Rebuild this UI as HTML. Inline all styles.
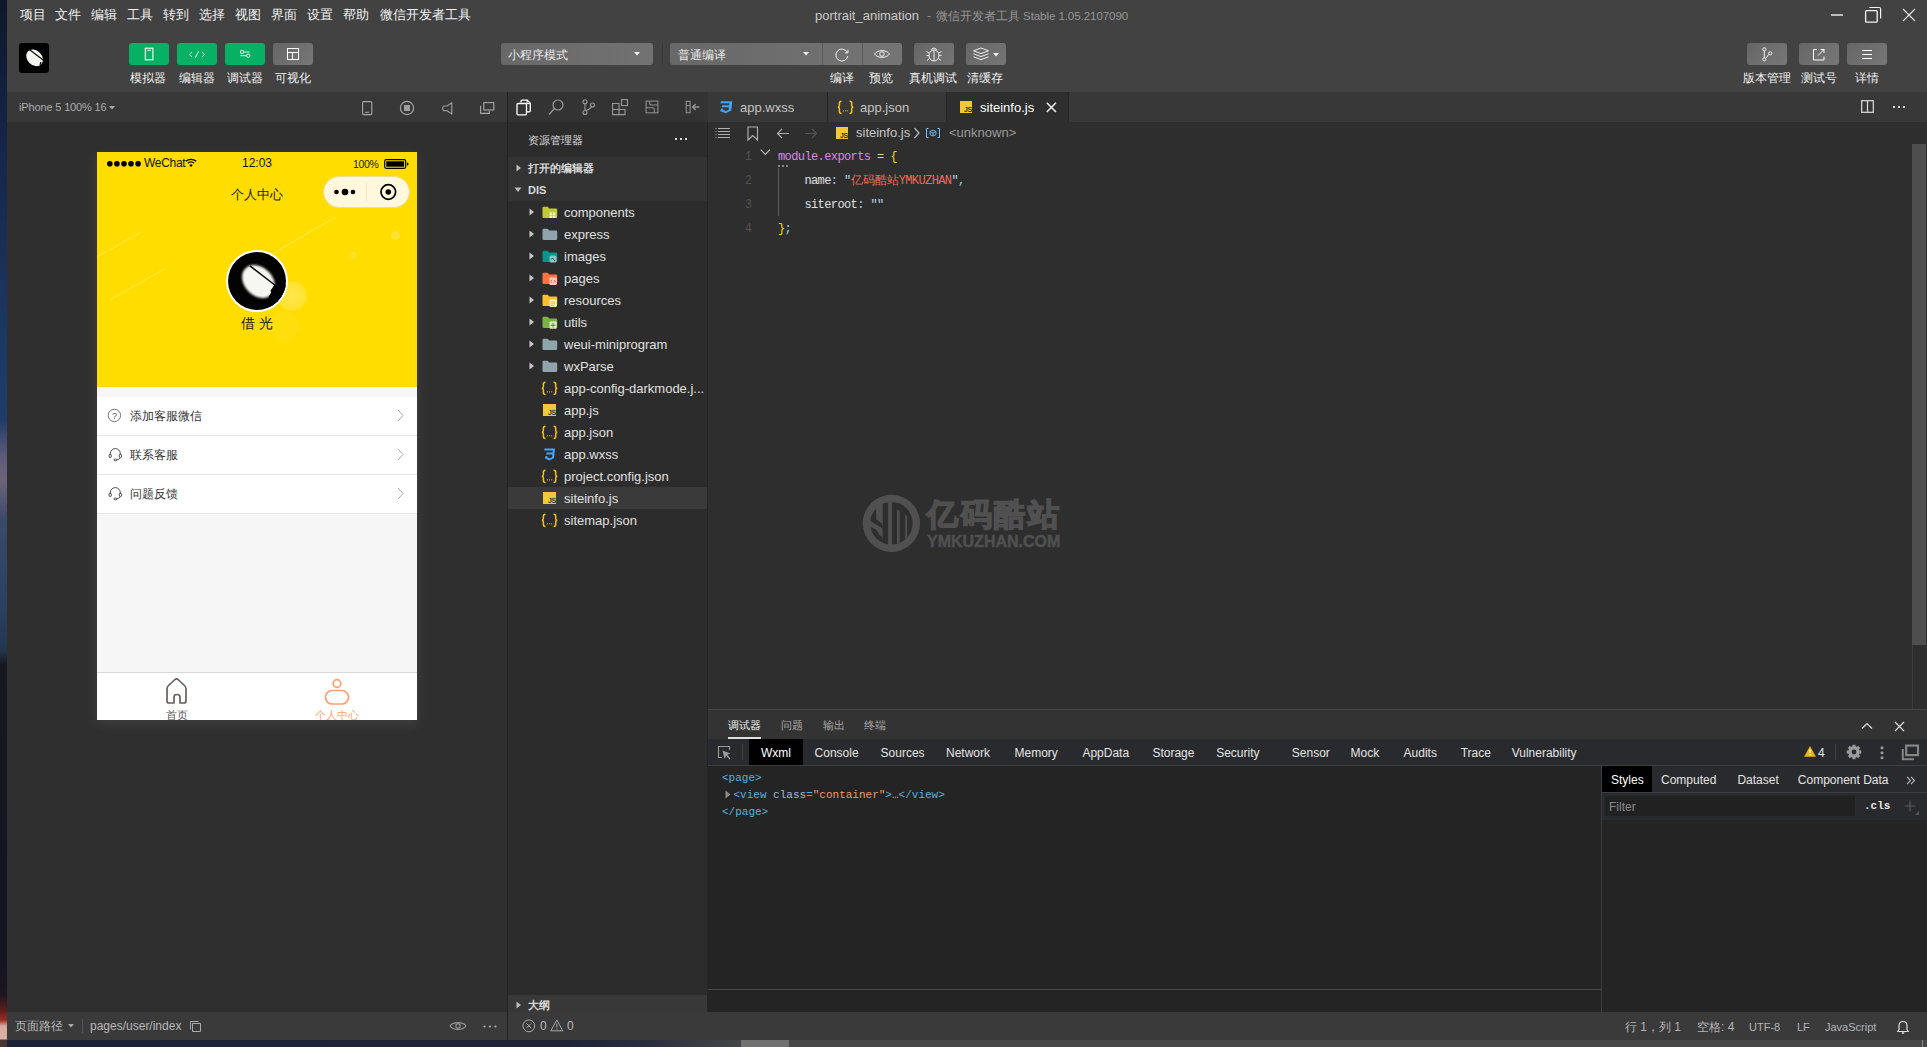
<!DOCTYPE html>
<html><head><meta charset="utf-8">
<style>
*{box-sizing:border-box;margin:0;padding:0}
html,body{width:1927px;height:1047px;overflow:hidden;background:#2e2e2e;font-family:"Liberation Sans",sans-serif;position:relative}
.a{position:absolute}
#desk{left:0;top:0;width:7px;height:1047px;background:linear-gradient(#0f1729 0px,#16264a 150px,#1c3662 320px,#203c68 420px,#5c5a7a 455px,#6e6478 480px,#3a4a6a 520px,#2a4262 600px,#243650 650px,#17171f 665px,#141520 960px,#1c1620 995px,#5a1c1c 1010px,#9a2c22 1020px,#d9a99e 1026px,#dcb0a6 1039px,#4a3430 1040px,#4a3430 1047px)}
#bstrip{left:7px;top:1040px;width:1920px;height:7px;background:linear-gradient(90deg,#1c2136 0px,#1e2336 560px,#2a2d3c 640px,#3d3e44 700px,#474747 745px,#474747 1920px)}
.menu{top:6px;font-size:13px;color:#f2f2f2;line-height:18px;white-space:nowrap}
.lbl{font-size:12px;color:#f0f0f0;line-height:14px;white-space:nowrap}
.btn{top:43px;height:22px;border-radius:3px;background:#6b6b6b}
.g{background:#07b163}
svg{position:absolute;overflow:visible}
</style></head><body>
<div class="a" id="desk"></div>
<div class="a" id="bstrip"></div>
<div class="a" style="left:741px;top:1040px;width:48px;height:7px;background:#707070"></div>

<!-- TOP BAR -->
<div class="a" style="left:7px;top:0;width:1920px;height:92px;background:#424242"></div>
<div class="a menu" style="left:20px">项目</div>
<div class="a menu" style="left:55px">文件</div>
<div class="a menu" style="left:91px">编辑</div>
<div class="a menu" style="left:127px">工具</div>
<div class="a menu" style="left:163px">转到</div>
<div class="a menu" style="left:199px">选择</div>
<div class="a menu" style="left:235px">视图</div>
<div class="a menu" style="left:271px">界面</div>
<div class="a menu" style="left:307px">设置</div>
<div class="a menu" style="left:343px">帮助</div>
<div class="a menu" style="left:380px">微信开发者工具</div>
<div class="a menu" style="left:815px;top:7px;font-size:13px;color:#c9c9c9">portrait_animation</div>
<div class="a menu" style="left:927px;top:7px;font-size:12px;color:#8f8f8f">-</div>
<div class="a menu" style="left:936px;top:7px;font-size:12px;color:#959595">微信开发者工具</div>
<div class="a menu" style="left:1023px;top:7px;font-size:11.6px;color:#959595;letter-spacing:-0.1px">Stable 1.05.2107090</div>

<!-- window controls -->
<div class="a" style="left:1831px;top:14px;width:12px;height:2px;background:#bdbdbd"></div>
<svg style="left:1864px;top:6px" width="19" height="18"><rect x="1.6" y="4.6" width="11.6" height="11.6" rx="1" fill="none" stroke="#f2f2f2" stroke-width="1.3"/><path d="M5.3 1.5H15.2Q16.6 1.5 16.6 2.9V12.6" fill="none" stroke="#f2f2f2" stroke-width="1.2"/></svg>
<svg style="left:1902px;top:8px" width="14" height="14"><path d="M1 1L13 13M13 1L1 13" stroke="#e6e6e6" stroke-width="1.1"/></svg>

<!-- logo -->
<div class="a" style="left:19px;top:43px;width:30px;height:30px;background:#020202;border-radius:3px;overflow:hidden">
 <svg style="left:0;top:0" width="30" height="30"><defs><filter id="bl" x="-50%" y="-50%" width="200%" height="200%"><feGaussianBlur stdDeviation="0.7"/></filter></defs>
 <g filter="url(#bl)"><ellipse cx="15.6" cy="14.8" rx="9.3" ry="7.3" transform="rotate(45 15.6 14.8)" fill="#f4f4f0"/></g>
 <path d="M10.3 6.5L24.5 17.3" stroke="#111" stroke-width="1.3"/><path d="M22 19L21 22" stroke="#050505" stroke-width="1.2"/></svg>
</div>
<!-- green buttons -->
<div class="a btn g" style="left:129px;width:40px"></div>
<svg style="left:129px;top:43px" width="40" height="22"><rect x="16.3" y="5.2" width="7.6" height="11.6" fill="none" stroke="#fff" stroke-width="1.1"/><path d="M18.3 7.3h3.6" stroke="#fff" stroke-width="1"/></svg>
<div class="a btn g" style="left:177px;width:40px"></div>
<svg style="left:177px;top:43px" width="40" height="22"><path d="M15 9L12.5 11.5L15 14M25 9L27.5 11.5L25 14M21.5 8.5L18.5 14.5" fill="none" stroke="#fff" stroke-width="1"/></svg>
<div class="a btn g" style="left:225px;width:40px"></div>
<svg style="left:225px;top:43px" width="40" height="22"><circle cx="17" cy="9" r="1.7" fill="none" stroke="#e0fff0" stroke-width="1"/><path d="M18.7 9H24.5M15.3 12.7H21.5" stroke="#d0f5e0" stroke-width="1"/><circle cx="23.2" cy="12.7" r="1.7" fill="none" stroke="#e0fff0" stroke-width="1"/></svg>
<div class="a btn" style="left:273px;width:40px;background:linear-gradient(135deg,#666,#777)"></div>
<svg style="left:273px;top:43px" width="40" height="22"><rect x="14.5" y="5.5" width="11" height="11" fill="none" stroke="#fff" stroke-width="1"/><path d="M14.5 9.5h11M19.5 9.5v7" stroke="#fff" stroke-width="1"/></svg>
<div class="a lbl" style="left:130px;top:71px">模拟器</div>
<div class="a lbl" style="left:179px;top:71px">编辑器</div>
<div class="a lbl" style="left:227px;top:71px">调试器</div>
<div class="a lbl" style="left:275px;top:71px">可视化</div>

<!-- mode dropdown -->
<div class="a btn" style="left:501px;width:152px;background:linear-gradient(90deg,#686868,#727272)"></div>
<div class="a" style="left:508px;top:47px;font-size:12px;color:#e8e8e8;line-height:16px">小程序模式</div>
<svg style="left:634px;top:52px" width="6" height="4"><path d="M0 0h6L3 3.5z" fill="#eee"/></svg>
<div class="a" style="left:662px;top:43px;width:1px;height:22px;background:#383838"></div>
<div class="a btn" style="left:670px;width:232px;background:linear-gradient(90deg,#686868,#747474)"></div>
<div class="a" style="left:822px;top:43px;width:1px;height:22px;background:#5c5c5c"></div>
<div class="a" style="left:862px;top:43px;width:1px;height:22px;background:#5c5c5c"></div>
<div class="a" style="left:678px;top:47px;font-size:12px;color:#e8e8e8;line-height:16px">普通编译</div>
<svg style="left:803px;top:52px" width="6" height="4"><path d="M0 0h6L3 3.5z" fill="#eee"/></svg>
<svg style="left:822px;top:43px" width="40" height="22"><path d="M25.3 9.5A6 6 0 1 0 25.8 13" fill="none" stroke="#eee" stroke-width="1"/><path d="M23 9.8h3v-3" fill="none" stroke="#eee" stroke-width="1"/></svg>
<svg style="left:862px;top:43px" width="40" height="22"><path d="M12.5 11C15.5 6.5 24.5 6.5 27.5 11C24.5 15.5 15.5 15.5 12.5 11z" fill="none" stroke="#eee" stroke-width="1"/><circle cx="20" cy="11" r="2.3" fill="none" stroke="#eee" stroke-width="1"/></svg>
<div class="a btn" style="left:914px;width:40px;background:linear-gradient(135deg,#666,#757575)"></div>
<svg style="left:914px;top:43px" width="40" height="22"><ellipse cx="20" cy="12.5" rx="5" ry="5.5" fill="none" stroke="#eee" stroke-width="1"/><path d="M17.5 7.5A2.5 2.5 0 0 1 22.5 7.5M20 7v11M15 10l-2.5-1.5M25 10l2.5-1.5M15 12.5h-2.5M25 12.5h2.5M15.5 15.5l-2.5 2M24.5 15.5l2.5 2" fill="none" stroke="#eee" stroke-width="1"/></svg>
<div class="a btn" style="left:966px;width:40px;background:linear-gradient(135deg,#666,#757575)"></div>
<svg style="left:966px;top:43px" width="40" height="22"><path d="M7.5 7.8L15 5L22.5 7.8L15 10.6z" fill="none" stroke="#eee" stroke-width="1"/><path d="M7.5 10.8L15 13.6L22.5 10.8M7.5 13.8L15 16.6L22.5 13.8" fill="none" stroke="#eee" stroke-width="1"/><path d="M27 10h6L30 13.5z" fill="#eee"/></svg>
<div class="a lbl" style="left:830px;top:71px">编译</div>
<div class="a lbl" style="left:869px;top:71px">预览</div>
<div class="a lbl" style="left:909px;top:71px">真机调试</div>
<div class="a lbl" style="left:967px;top:71px">清缓存</div>

<!-- right buttons -->
<div class="a btn" style="left:1747px;width:40px;background:linear-gradient(135deg,#666,#777)"></div>
<svg style="left:1747px;top:43px" width="40" height="22"><circle cx="17.3" cy="6.3" r="1.6" fill="none" stroke="#eee" stroke-width="1"/><circle cx="17.3" cy="16.3" r="1.6" fill="none" stroke="#eee" stroke-width="1"/><circle cx="23.3" cy="10.3" r="1.6" fill="none" stroke="#eee" stroke-width="1"/><path d="M17.3 8v6.6M18.8 15.3L21.8 11.3" stroke="#eee" stroke-width="1"/></svg>
<div class="a btn" style="left:1799px;width:40px;background:linear-gradient(135deg,#666,#777)"></div>
<svg style="left:1799px;top:43px" width="40" height="22"><path d="M18 6.5h-3.5v10.5h10.5v-3.5" fill="none" stroke="#fff" stroke-width="1"/><path d="M19 12.5L25 6.5M21.5 6.5h3.5v3.5" fill="none" stroke="#fff" stroke-width="1"/></svg>
<div class="a btn" style="left:1847px;width:40px;background:linear-gradient(135deg,#666,#777)"></div>
<svg style="left:1847px;top:43px" width="40" height="22"><path d="M15 7.5h10M15 11.5h10M15 15.5h10" stroke="#fff" stroke-width="1"/></svg>
<div class="a lbl" style="left:1743px;top:71px">版本管理</div>
<div class="a lbl" style="left:1801px;top:71px">测试号</div>
<div class="a lbl" style="left:1855px;top:71px">详情</div>

<!-- SIMULATOR -->
<div class="a" style="left:7px;top:92px;width:500px;height:30px;background:#383838"></div>
<div class="a" style="left:7px;top:122px;width:500px;height:890px;background:#2f2f2f"></div>
<div class="a" style="left:507px;top:92px;width:1px;height:948px;background:#232323"></div>
<div class="a" style="left:19px;top:100px;font-size:11px;color:#acacac;line-height:14px;letter-spacing:-0.15px;white-space:nowrap">iPhone 5 100% 16</div>
<svg style="left:109px;top:106px" width="6" height="4"><path d="M0 0h6L3 3.5z" fill="#aaa"/></svg>
<svg style="left:362px;top:101px" width="12" height="15"><rect x="0.6" y="0.6" width="9.2" height="13" rx="1" fill="none" stroke="#a8a8a8" stroke-width="1.1"/><path d="M3 11.3h4" stroke="#a8a8a8" stroke-width="1"/></svg>
<svg style="left:399px;top:100px" width="16" height="16"><circle cx="8" cy="8" r="6.6" fill="none" stroke="#a8a8a8" stroke-width="1.1"/><rect x="5" y="5" width="6" height="6" fill="#a0a0a0"/></svg>
<svg style="left:442px;top:102px" width="12" height="13"><path d="M9.8 0.7V11.9L4.8 8.6H2.2Q0.8 8.6 0.8 7.2V5.4Q0.8 4 2.2 4H4.8z" fill="none" stroke="#9a9a9a" stroke-width="1.2" stroke-linejoin="round"/></svg>
<svg style="left:480px;top:102px" width="15" height="13"><rect x="3.8" y="0.6" width="10" height="7.4" fill="none" stroke="#a8a8a8" stroke-width="1.1"/><path d="M0.6 3.8V11.4H9.3V9" fill="none" stroke="#a8a8a8" stroke-width="1.1"/></svg>

<!-- phone glow -->
<div class="a" style="left:97px;top:152px;width:320px;height:568px;box-shadow:0 4px 12px rgba(190,190,190,.13)"></div>
<div class="a" style="left:97px;top:152px;width:320px;height:568px;background:#f6f6f6;overflow:hidden">
  <div class="a" style="left:0;top:0;width:320px;height:235px;background:#ffdd00"></div>
  <svg style="left:0;top:0" width="320" height="235">
    <defs><radialGradient id="gl"><stop offset="0" stop-color="#fff" stop-opacity=".35"/><stop offset="1" stop-color="#fff" stop-opacity="0"/></radialGradient></defs>
    <circle cx="195" cy="144" r="14.5" fill="#fff" opacity=".16"/><circle cx="195" cy="144" r="17" fill="url(#gl)" opacity=".5"/>
    <circle cx="187" cy="174" r="15" fill="#fff" opacity=".05"/>
    <circle cx="298.5" cy="83.6" r="4.5" fill="#fff" opacity=".2"/>
    <circle cx="256" cy="103.5" r="3.7" fill="#fff" opacity=".15"/>
    <g stroke="#fff" stroke-width="1.3" opacity=".22">
      <path d="M0.4 104.7L42.6 81"/><path d="M12.8 148L67.4 117"/><path d="M176.7 101L238.8 65"/>
    </g>
  </svg>
  <!-- status bar -->
  <svg style="left:8px;top:8px" width="40" height="8"><g fill="#000"><circle cx="4.8" cy="3.8" r="2.8"/><circle cx="11.9" cy="3.8" r="2.8"/><circle cx="19" cy="3.8" r="2.8"/><circle cx="26" cy="3.8" r="2.8"/><circle cx="33.1" cy="3.8" r="2.8"/></g></svg>
  <div class="a" style="left:47px;top:3.5px;font-size:12px;color:#111;line-height:14px;letter-spacing:-0.3px">WeChat</div>
  <svg style="left:88px;top:6px" width="13" height="10"><path d="M0.8 3.2A8 8 0 0 1 11.2 3.2" fill="none" stroke="#000" stroke-width="1.3"/><path d="M2.8 5.2A5 5 0 0 1 9.2 5.2" fill="none" stroke="#000" stroke-width="1.3"/><path d="M4.3 7.2L6 9L7.7 7.2A2.4 2.4 0 0 0 4.3 7.2z" fill="#000"/></svg>
  <div class="a" style="left:145px;top:3.5px;font-size:12px;color:#111;line-height:14px">12:03</div>
  <div class="a" style="left:256px;top:6px;font-size:10.5px;color:#222;line-height:13px;letter-spacing:-0.3px">100%</div>
  <svg style="left:287px;top:7px" width="26" height="11"><rect x="0.7" y="0.7" width="21" height="8.6" rx="1.5" fill="none" stroke="#000" stroke-width="1.2"/><rect x="2.3" y="2.3" width="17.8" height="5.4" fill="#000"/><path d="M23 3.4v3.2a1.6 1.6 0 0 0 0-3.2z" fill="#000"/></svg>
  <!-- nav -->
  <div class="a" style="left:0;top:35px;width:320px;text-align:center;font-size:13px;color:#1a1a1a;line-height:16px">个人中心</div>
  <div class="a" style="left:226px;top:24px;width:87px;height:32px;border-radius:16px;background:#fff8dc;border:1px solid #eedd99"></div>
  <div class="a" style="left:269px;top:31px;width:1px;height:18px;background:#f2e8c4"></div>
  <svg style="left:234px;top:34px" width="30" height="12"><g fill="#000"><circle cx="5.5" cy="6" r="2.3"/><circle cx="14" cy="6" r="3.3"/><circle cx="22" cy="6" r="2.3"/></g></svg>
  <svg style="left:283px;top:32px" width="16" height="16"><circle cx="8.3" cy="8" r="7.3" fill="none" stroke="#000" stroke-width="1.7"/><circle cx="8.3" cy="8" r="2.8" fill="#000"/></svg>
  <!-- avatar -->
  <div class="a" style="left:129px;top:98px;width:62px;height:62px;border-radius:50%;background:#fff"></div>
  <div class="a" style="left:131px;top:100px;width:58px;height:58px;border-radius:50%;background:#030303;overflow:hidden">
    <svg style="left:0;top:0" width="58" height="58"><defs><filter id="bl2" x="-50%" y="-50%" width="200%" height="200%"><feGaussianBlur stdDeviation="1.1"/></filter></defs>
    <g filter="url(#bl2)"><ellipse cx="30.5" cy="29.5" rx="18.5" ry="14" transform="rotate(45 30.5 29.5)" fill="#f6f6f2"/></g>
    <path d="M46.8 32.6L42.5 38.5L43.2 40.5L40.8 44.6L40.5 56H58V32.6z" fill="#040404"/><path d="M21.9 13.8L46.8 33" stroke="#0a0a0a" stroke-width="1.5"/></svg>
  </div>
<div class="a" style="left:0;top:162px;width:320px;text-align:center;font-size:14px;color:#111;line-height:18px">借 光</div>
  <!-- list -->
  <div class="a" style="left:0;top:245px;width:320px;height:39px;background:#fff;border-bottom:1px solid #e6e6e6"></div>
  <div class="a" style="left:0;top:284px;width:320px;height:39px;background:#fff;border-bottom:1px solid #e6e6e6"></div>
  <div class="a" style="left:0;top:323px;width:320px;height:39px;background:#fff;border-bottom:1px solid #e6e6e6"></div>
  <svg style="left:10px;top:256px" width="15" height="15"><circle cx="7.4" cy="7.4" r="6.2" fill="none" stroke="#666" stroke-width="0.9"/><text x="7.4" y="10.8" font-size="9" text-anchor="middle" fill="#555" font-family="Liberation Sans">?</text></svg>
  <svg style="left:10px;top:295px" width="15" height="15"><path d="M3.3 8V6.6A5 5 0 0 1 13.3 6.6V8" fill="none" stroke="#3a3a3a" stroke-width="0.9"/><ellipse cx="3.2" cy="8.9" rx="1.2" ry="1.8" fill="none" stroke="#3a3a3a" stroke-width="0.9"/><ellipse cx="13.4" cy="8.9" rx="1.2" ry="1.8" fill="none" stroke="#3a3a3a" stroke-width="0.9"/><path d="M13 10.8Q12.3 12.6 9.8 12.9" fill="none" stroke="#3a3a3a" stroke-width="0.9"/><ellipse cx="8.4" cy="12.9" rx="1.5" ry="0.9" fill="none" stroke="#3a3a3a" stroke-width="0.9"/></svg>
  <svg style="left:10px;top:334px" width="15" height="15"><path d="M3.3 8V6.6A5 5 0 0 1 13.3 6.6V8" fill="none" stroke="#3a3a3a" stroke-width="0.9"/><ellipse cx="3.2" cy="8.9" rx="1.2" ry="1.8" fill="none" stroke="#3a3a3a" stroke-width="0.9"/><ellipse cx="13.4" cy="8.9" rx="1.2" ry="1.8" fill="none" stroke="#3a3a3a" stroke-width="0.9"/><path d="M13 10.8Q12.3 12.6 9.8 12.9" fill="none" stroke="#3a3a3a" stroke-width="0.9"/><ellipse cx="8.4" cy="12.9" rx="1.5" ry="0.9" fill="none" stroke="#3a3a3a" stroke-width="0.9"/></svg>
  <div class="a" style="left:33px;top:256px;font-size:12px;color:#333;line-height:16px">添加客服微信</div>
  <div class="a" style="left:33px;top:295px;font-size:12px;color:#333;line-height:16px">联系客服</div>
  <div class="a" style="left:33px;top:334px;font-size:12px;color:#333;line-height:16px">问题反馈</div>
  <svg style="left:300px;top:257px" width="8" height="14"><path d="M1 1L6 6.5L1 12" fill="none" stroke="#aaa" stroke-width="1"/></svg>
  <svg style="left:300px;top:296px" width="8" height="14"><path d="M1 1L6 6.5L1 12" fill="none" stroke="#aaa" stroke-width="1"/></svg>
  <svg style="left:300px;top:335px" width="8" height="14"><path d="M1 1L6 6.5L1 12" fill="none" stroke="#aaa" stroke-width="1"/></svg>
  <!-- tabbar -->
  <div class="a" style="left:0;top:520px;width:320px;height:48px;background:#fff;border-top:1px solid #d8d8d8"></div>
  <svg style="left:68px;top:525px" width="25" height="29"><path d="M2 24V12Q2 10 3.5 8.5L10 2.5Q11.5 1.2 13 2.5L19.5 8.5Q21 10 21 12V24Q21 26 19 26H15V20Q15 17.5 12 17.5Q9 17.5 9 20V26H4Q2 26 2 24z" fill="none" stroke="#6b5e5e" stroke-width="1.7" stroke-linejoin="round"/></svg>
  <div class="a" style="left:55px;top:557px;width:50px;text-align:center;font-size:11px;color:#555;line-height:12px">首页</div>
  <svg style="left:227px;top:526px" width="26" height="28"><circle cx="13" cy="5.5" r="3.8" fill="none" stroke="#ff9f70" stroke-width="1.7"/><rect x="1.5" y="12.5" width="23" height="13.5" rx="6.7" fill="none" stroke="#ff9f70" stroke-width="1.7"/></svg>
  <div class="a" style="left:200px;top:557px;width:80px;text-align:center;font-size:11px;color:#ff9f70;line-height:12px">个人中心</div>
</div>

<!-- sim status bar -->
<div class="a" style="left:7px;top:1012px;width:500px;height:28px;background:#3a3a3a"></div>
<div class="a" style="left:15px;top:1018px;font-size:12px;color:#b8b8b8;line-height:16px;white-space:nowrap">页面路径</div>
<svg style="left:68px;top:1024px" width="6" height="4"><path d="M0 0h6L3 3.5z" fill="#aaa"/></svg>
<div class="a" style="left:82px;top:1019px;width:1px;height:14px;background:#555"></div>
<div class="a" style="left:90px;top:1018px;font-size:12px;color:#b8b8b8;line-height:16px;white-space:nowrap">pages/user/index</div>
<svg style="left:189px;top:1020px" width="13" height="13"><path d="M3.5 3.5h8v8h-8z" fill="none" stroke="#aaa" stroke-width="1"/><path d="M1.5 9.5v-8h8" fill="none" stroke="#aaa" stroke-width="1"/></svg>
<svg style="left:449px;top:1020px" width="18" height="12"><path d="M1 6C4 1.5 14 1.5 17 6C14 10.5 4 10.5 1 6z" fill="none" stroke="#999" stroke-width="1.1"/><circle cx="9" cy="6" r="2.2" fill="none" stroke="#999" stroke-width="1.1"/></svg>
<svg style="left:483px;top:1025px" width="14" height="3"><g fill="#aaa"><circle cx="1.5" cy="1.5" r="1.1"/><circle cx="7" cy="1.5" r="1.1"/><circle cx="12.5" cy="1.5" r="1.1"/></g></svg>

<!-- EXPLORER -->
<div class="a" style="left:508px;top:92px;width:200px;height:30px;background:#333333"></div>
<div class="a" style="left:508px;top:122px;width:200px;height:890px;background:#2c2c2c"></div>
<div class="a" style="left:508px;top:157px;width:199px;height:44px;background:#333333"></div>
<div class="a" style="left:508px;top:487px;width:199px;height:22px;background:#3a3a3a"></div>
<div class="a" style="left:707px;top:122px;width:1px;height:890px;background:#252525"></div>
<svg style="left:516px;top:99px" width="16" height="17"><path d="M5 3.5V2.2Q5 1.2 6 1.2H11.2L14.3 4.3V11.8Q14.3 12.8 13.3 12.8H10.5" fill="none" stroke="#fff" stroke-width="1.3"/><path d="M11 1.2V4.6H14.3" fill="none" stroke="#fff" stroke-width="1"/><path d="M1 5.5Q1 4.5 2 4.5H9.5Q10.5 4.5 10.5 5.5V14.8Q10.5 15.8 9.5 15.8H2Q1 15.8 1 14.8z" fill="#333" stroke="#fff" stroke-width="1.3"/></svg>
<svg style="left:548px;top:99px" width="17" height="17"><circle cx="10" cy="6" r="5" fill="none" stroke="#9a9a9a" stroke-width="1.2"/><path d="M6.5 9.5L1 15.5" stroke="#9a9a9a" stroke-width="1.3"/></svg>
<svg style="left:582px;top:99px" width="14" height="17"><circle cx="3" cy="2.8" r="2" fill="none" stroke="#9a9a9a" stroke-width="1.1"/><circle cx="3" cy="13.5" r="2" fill="none" stroke="#9a9a9a" stroke-width="1.1"/><circle cx="10.5" cy="6" r="2" fill="none" stroke="#9a9a9a" stroke-width="1.1"/><path d="M3 4.8V11.5M9.5 7.8Q7.5 10.5 3.5 11.5" fill="none" stroke="#9a9a9a" stroke-width="1.1"/></svg>
<svg style="left:612px;top:99px" width="17" height="17"><path d="M0.6 4.5H7V10.5H0.6zM0.6 10.5H7V15.6H0.6zM7 10.5H13V15.6H7z" fill="none" stroke="#9a9a9a" stroke-width="1.1"/><rect x="9.5" y="0.6" width="6" height="6" fill="none" stroke="#9a9a9a" stroke-width="1.1"/></svg>
<svg style="left:645px;top:100px" width="14" height="14"><rect x="1.1" y="1.1" width="11.8" height="11.7" fill="none" stroke="#8e8e8e" stroke-width="1.1"/><path d="M4.6 1.1V3Q4.6 5 6.6 5H12.9M1.1 7.8H8Q9.3 7.8 9.3 9.5V12.8" fill="none" stroke="#8e8e8e" stroke-width="1.1"/></svg>
<svg style="left:685px;top:100px" width="16" height="14"><rect x="1.3" y="1.3" width="3.8" height="11.4" fill="none" stroke="#8e8e8e" stroke-width="1.1"/><path d="M1.3 5.6H5.1" stroke="#8e8e8e" stroke-width="1"/><path d="M14.5 7H8M10.7 4.1L7.6 7L10.7 9.9" fill="none" stroke="#8e8e8e" stroke-width="1.6"/></svg>
<div class="a" style="left:528px;top:132px;font-size:11px;color:#dcdcdc;line-height:16px">资源管理器</div>
<svg style="left:675px;top:138px" width="14" height="3"><g fill="#ddd"><rect x="0" y="0" width="2" height="2"/><rect x="5" y="0" width="2" height="2"/><rect x="10" y="0" width="2" height="2"/></g></svg>
<svg style="left:516px;top:164px" width="6" height="8"><path d="M0.5 0.5L5 4L0.5 7.5z" fill="#bbb"/></svg>
<div class="a" style="left:528px;top:161px;font-size:11px;color:#d8d8d8;line-height:14px;font-weight:bold">打开的编辑器</div>
<svg style="left:514px;top:187px" width="8" height="6"><path d="M0.5 0.5H7.5L4 5z" fill="#bbb"/></svg>
<div class="a" style="left:528px;top:183px;font-size:11px;color:#d8d8d8;line-height:14px;font-weight:bold">DIS</div>
<svg style="left:529px;top:208px" width="6" height="8"><path d="M0.5 0.5L5 4L0.5 7.5z" fill="#c8c8c8"/></svg><svg style="left:542px;top:206px" width="17" height="14"><path d="M0.5 2Q0.5 0.8 1.7 0.8H5.6L7.3 2.5H14Q15.2 2.5 15.2 3.7V10.8Q15.2 12 14 12H1.7Q0.5 12 0.5 10.8z" fill="#c0ca33"/><g fill="#f0f4c3"><rect x="7.5" y="6.5" width="2.6" height="2.4"/><rect x="10.8" y="6.5" width="2.6" height="2.4"/><rect x="7.5" y="9.6" width="2.6" height="2.4"/><rect x="10.8" y="9.6" width="2.6" height="2.4"/></g></svg><div class="a" style="left:564px;top:205px;font-size:13px;color:#e0e0e0;line-height:16px">components</div>
<svg style="left:529px;top:230px" width="6" height="8"><path d="M0.5 0.5L5 4L0.5 7.5z" fill="#c8c8c8"/></svg><svg style="left:542px;top:228px" width="17" height="14"><path d="M0.5 2Q0.5 0.8 1.7 0.8H5.6L7.3 2.5H14Q15.2 2.5 15.2 3.7V10.8Q15.2 12 14 12H1.7Q0.5 12 0.5 10.8z" fill="#90a4ae"/></svg><div class="a" style="left:564px;top:227px;font-size:13px;color:#e0e0e0;line-height:16px">express</div>
<svg style="left:529px;top:252px" width="6" height="8"><path d="M0.5 0.5L5 4L0.5 7.5z" fill="#c8c8c8"/></svg><svg style="left:542px;top:250px" width="17" height="14"><path d="M0.5 2Q0.5 0.8 1.7 0.8H5.6L7.3 2.5H14Q15.2 2.5 15.2 3.7V10.8Q15.2 12 14 12H1.7Q0.5 12 0.5 10.8z" fill="#009688"/><rect x="7.5" y="5.5" width="7" height="7" rx="1.5" fill="#80cbc4"/><path d="M9 9.5L10.5 8L13 11" stroke="#00695c" stroke-width="1" fill="none"/></svg><div class="a" style="left:564px;top:249px;font-size:13px;color:#e0e0e0;line-height:16px">images</div>
<svg style="left:529px;top:274px" width="6" height="8"><path d="M0.5 0.5L5 4L0.5 7.5z" fill="#c8c8c8"/></svg><svg style="left:542px;top:272px" width="17" height="14"><path d="M0.5 2Q0.5 0.8 1.7 0.8H5.6L7.3 2.5H14Q15.2 2.5 15.2 3.7V10.8Q15.2 12 14 12H1.7Q0.5 12 0.5 10.8z" fill="#ff7043"/><rect x="7.5" y="5.5" width="7.2" height="7.5" rx="1" fill="#ffccbc"/><path d="M10 7.8L8.8 9.2L10 10.6M12 7.8L13.2 9.2L12 10.6" stroke="#e64a19" stroke-width="0.8" fill="none"/></svg><div class="a" style="left:564px;top:271px;font-size:13px;color:#e0e0e0;line-height:16px">pages</div>
<svg style="left:529px;top:296px" width="6" height="8"><path d="M0.5 0.5L5 4L0.5 7.5z" fill="#c8c8c8"/></svg><svg style="left:542px;top:294px" width="17" height="14"><path d="M0.5 2Q0.5 0.8 1.7 0.8H5.6L7.3 2.5H14Q15.2 2.5 15.2 3.7V10.8Q15.2 12 14 12H1.7Q0.5 12 0.5 10.8z" fill="#fbc02d"/><rect x="7.5" y="5.5" width="7.2" height="7.5" rx="1" fill="#fff3c4"/><path d="M9 8h4M9 9.8h4M9 11.5h3" stroke="#f9a825" stroke-width="0.8"/></svg><div class="a" style="left:564px;top:293px;font-size:13px;color:#e0e0e0;line-height:16px">resources</div>
<svg style="left:529px;top:318px" width="6" height="8"><path d="M0.5 0.5L5 4L0.5 7.5z" fill="#c8c8c8"/></svg><svg style="left:542px;top:316px" width="17" height="14"><path d="M0.5 2Q0.5 0.8 1.7 0.8H5.6L7.3 2.5H14Q15.2 2.5 15.2 3.7V10.8Q15.2 12 14 12H1.7Q0.5 12 0.5 10.8z" fill="#7cb342"/><rect x="7.5" y="5.5" width="7.2" height="7.2" rx="1" fill="#dcedc8"/><path d="M11.1 6.8v4.8M8.7 9.2h4.8" stroke="#558b2f" stroke-width="1"/></svg><div class="a" style="left:564px;top:315px;font-size:13px;color:#e0e0e0;line-height:16px">utils</div>
<svg style="left:529px;top:340px" width="6" height="8"><path d="M0.5 0.5L5 4L0.5 7.5z" fill="#c8c8c8"/></svg><svg style="left:542px;top:338px" width="17" height="14"><path d="M0.5 2Q0.5 0.8 1.7 0.8H5.6L7.3 2.5H14Q15.2 2.5 15.2 3.7V10.8Q15.2 12 14 12H1.7Q0.5 12 0.5 10.8z" fill="#90a4ae"/></svg><div class="a" style="left:564px;top:337px;font-size:13px;color:#e0e0e0;line-height:16px">weui-miniprogram</div>
<svg style="left:529px;top:362px" width="6" height="8"><path d="M0.5 0.5L5 4L0.5 7.5z" fill="#c8c8c8"/></svg><svg style="left:542px;top:360px" width="17" height="14"><path d="M0.5 2Q0.5 0.8 1.7 0.8H5.6L7.3 2.5H14Q15.2 2.5 15.2 3.7V10.8Q15.2 12 14 12H1.7Q0.5 12 0.5 10.8z" fill="#90a4ae"/></svg><div class="a" style="left:564px;top:359px;font-size:13px;color:#e0e0e0;line-height:16px">wxParse</div>
<svg style="left:541px;top:381px" width="18" height="15"><path d="M4.5 1.2Q2.4 1.2 2.4 3.2V5.6Q2.4 7.3 0.8 7.3Q2.4 7.3 2.4 9V11.4Q2.4 13.4 4.5 13.4M12.6 1.2Q14.7 1.2 14.7 3.2V5.6Q14.7 7.3 16.3 7.3Q14.7 7.3 14.7 9V11.4Q14.7 13.4 12.6 13.4" fill="none" stroke="#f5c21b" stroke-width="1.5"/><g fill="#d9ae3a"><rect x="5.9" y="10.3" width="1.1" height="1.1"/><rect x="8" y="10.3" width="1.1" height="1.1"/><rect x="10.1" y="10.3" width="1.1" height="1.1"/></g></svg><div class="a" style="left:564px;top:381px;font-size:13px;color:#e0e0e0;line-height:16px;white-space:nowrap">app-config-darkmode.j...</div>
<div class="a" style="left:543px;top:404px;width:13px;height:12px;background:#f5c53a"></div><div class="a" style="left:548px;top:409px;font-size:7px;line-height:7px;color:#333;font-weight:bold;letter-spacing:-0.3px">JS</div><div class="a" style="left:564px;top:403px;font-size:13px;color:#e0e0e0;line-height:16px;white-space:nowrap">app.js</div>
<svg style="left:541px;top:425px" width="18" height="15"><path d="M4.5 1.2Q2.4 1.2 2.4 3.2V5.6Q2.4 7.3 0.8 7.3Q2.4 7.3 2.4 9V11.4Q2.4 13.4 4.5 13.4M12.6 1.2Q14.7 1.2 14.7 3.2V5.6Q14.7 7.3 16.3 7.3Q14.7 7.3 14.7 9V11.4Q14.7 13.4 12.6 13.4" fill="none" stroke="#f5c21b" stroke-width="1.5"/><g fill="#d9ae3a"><rect x="5.9" y="10.3" width="1.1" height="1.1"/><rect x="8" y="10.3" width="1.1" height="1.1"/><rect x="10.1" y="10.3" width="1.1" height="1.1"/></g></svg><div class="a" style="left:564px;top:425px;font-size:13px;color:#e0e0e0;line-height:16px;white-space:nowrap">app.json</div>
<svg style="left:543px;top:448px" width="13" height="13"><path d="M1.5 0.5H12L11 10L6.5 12.5L2 10.5L2.5 8H4.5L4.3 9.3L6.6 10.3L9 9.3L9.3 6.5H3.2L3.5 4.5H9.6L9.8 2.5H1.2z" fill="#42a5f5"/></svg><div class="a" style="left:564px;top:447px;font-size:13px;color:#e0e0e0;line-height:16px;white-space:nowrap">app.wxss</div>
<svg style="left:541px;top:469px" width="18" height="15"><path d="M4.5 1.2Q2.4 1.2 2.4 3.2V5.6Q2.4 7.3 0.8 7.3Q2.4 7.3 2.4 9V11.4Q2.4 13.4 4.5 13.4M12.6 1.2Q14.7 1.2 14.7 3.2V5.6Q14.7 7.3 16.3 7.3Q14.7 7.3 14.7 9V11.4Q14.7 13.4 12.6 13.4" fill="none" stroke="#f5c21b" stroke-width="1.5"/><g fill="#d9ae3a"><rect x="5.9" y="10.3" width="1.1" height="1.1"/><rect x="8" y="10.3" width="1.1" height="1.1"/><rect x="10.1" y="10.3" width="1.1" height="1.1"/></g></svg><div class="a" style="left:564px;top:469px;font-size:13px;color:#e0e0e0;line-height:16px;white-space:nowrap">project.config.json</div>
<div class="a" style="left:543px;top:492px;width:13px;height:12px;background:#f5c53a"></div><div class="a" style="left:548px;top:497px;font-size:7px;line-height:7px;color:#333;font-weight:bold;letter-spacing:-0.3px">JS</div><div class="a" style="left:564px;top:491px;font-size:13px;color:#e0e0e0;line-height:16px;white-space:nowrap">siteinfo.js</div>
<svg style="left:541px;top:513px" width="18" height="15"><path d="M4.5 1.2Q2.4 1.2 2.4 3.2V5.6Q2.4 7.3 0.8 7.3Q2.4 7.3 2.4 9V11.4Q2.4 13.4 4.5 13.4M12.6 1.2Q14.7 1.2 14.7 3.2V5.6Q14.7 7.3 16.3 7.3Q14.7 7.3 14.7 9V11.4Q14.7 13.4 12.6 13.4" fill="none" stroke="#f5c21b" stroke-width="1.5"/><g fill="#d9ae3a"><rect x="5.9" y="10.3" width="1.1" height="1.1"/><rect x="8" y="10.3" width="1.1" height="1.1"/><rect x="10.1" y="10.3" width="1.1" height="1.1"/></g></svg><div class="a" style="left:564px;top:513px;font-size:13px;color:#e0e0e0;line-height:16px;white-space:nowrap">sitemap.json</div>

<div class="a" style="left:508px;top:995px;width:199px;height:17px;background:#383838"></div>
<svg style="left:516px;top:1001px" width="6" height="8"><path d="M0.5 0.5L5 4L0.5 7.5z" fill="#bbb"/></svg>
<div class="a" style="left:528px;top:998px;font-size:11px;color:#d8d8d8;line-height:14px;font-weight:bold">大纲</div>

<!-- EDITOR -->
<div class="a" style="left:708px;top:92px;width:1219px;height:30px;background:#383838"></div>
<div class="a" style="left:708px;top:122px;width:1219px;height:587px;background:#2e2e2e"></div>
<div class="a" style="left:947px;top:92px;width:121px;height:30px;background:#2e2e2e"></div>
<div class="a" style="left:827px;top:92px;width:1px;height:30px;background:#262626"></div>
<div class="a" style="left:946px;top:92px;width:1px;height:30px;background:#262626"></div>
<div class="a" style="left:1068px;top:92px;width:1px;height:30px;background:#262626"></div>
<svg style="left:719px;top:101px" width="14" height="13"><path d="M1.8 0.3H13.3L12.3 9.5L6.8 12.3L1.3 10.2L1.8 7.8H4.4L4.2 8.9L6.9 9.9L9.6 8.9L9.9 6.2H2.8L3.2 4.2H10.1L10.3 2.3H1.4z" fill="#42a5f5"/></svg>
<div class="a" style="left:740px;top:100px;font-size:13px;color:#c4c4c4;line-height:16px">app.wxss</div>
<svg style="left:837px;top:100px" width="18" height="15"><path d="M4.5 1.2Q2.4 1.2 2.4 3.2V5.6Q2.4 7.3 0.8 7.3Q2.4 7.3 2.4 9V11.4Q2.4 13.4 4.5 13.4M12.6 1.2Q14.7 1.2 14.7 3.2V5.6Q14.7 7.3 16.3 7.3Q14.7 7.3 14.7 9V11.4Q14.7 13.4 12.6 13.4" fill="none" stroke="#f5c21b" stroke-width="1.5"/><g fill="#d9ae3a"><rect x="5.9" y="10.3" width="1.1" height="1.1"/><rect x="8" y="10.3" width="1.1" height="1.1"/><rect x="10.1" y="10.3" width="1.1" height="1.1"/></g></svg>
<div class="a" style="left:860px;top:100px;font-size:13px;color:#c4c4c4;line-height:16px">app.json</div>
<div class="a" style="left:960px;top:101px;width:12px;height:12px;background:#f5c53a"></div>
<div class="a" style="left:964px;top:106px;font-size:7px;line-height:7px;color:#333;font-weight:bold;letter-spacing:-0.3px">JS</div>
<div class="a" style="left:980px;top:100px;font-size:13px;color:#fff;line-height:16px">siteinfo.js</div>
<svg style="left:1046px;top:102px" width="11" height="11"><path d="M0.8 0.8L10 10M10 0.8L0.8 10" stroke="#f0f0f0" stroke-width="1.5"/></svg>
<svg style="left:1861px;top:100px" width="13" height="13"><rect x="0.7" y="0.7" width="11.6" height="11.6" fill="none" stroke="#ddd" stroke-width="1.2"/><path d="M6.5 0.7V12.3" stroke="#ddd" stroke-width="1.2"/></svg>
<svg style="left:1893px;top:106px" width="14" height="3"><g fill="#ddd"><rect x="0" y="0" width="2" height="2"/><rect x="5" y="0" width="2" height="2"/><rect x="10" y="0" width="2" height="2"/></g></svg>

<!-- breadcrumb -->
<svg style="left:715px;top:127px" width="16" height="12"><g stroke="#b0b0b0" stroke-width="1.1"><path d="M3 1.5h12M3 4.5h12M3 7.5h12M3 10.5h12"/></g><g fill="#b0b0b0"><rect x="0.5" y="1" width="1" height="1"/><rect x="0.5" y="4" width="1" height="1"/><rect x="0.5" y="7" width="1" height="1"/><rect x="0.5" y="10" width="1" height="1"/></g></svg>
<svg style="left:747px;top:126px" width="12" height="15"><path d="M1 1H10.5V14L5.75 9.5L1 14z" fill="none" stroke="#aaa" stroke-width="1.2"/></svg>
<svg style="left:776px;top:128px" width="14" height="11"><path d="M13 5.5H1.5M6 1L1.5 5.5L6 10" fill="none" stroke="#aaa" stroke-width="1.2"/></svg>
<svg style="left:804px;top:128px" width="14" height="11"><path d="M1 5.5H12.5M8 1L12.5 5.5L8 10" fill="none" stroke="#555" stroke-width="1.2"/></svg>
<div class="a" style="left:836px;top:127px;width:12px;height:12px;background:#f5c53a"></div>
<div class="a" style="left:840px;top:132px;font-size:7px;line-height:7px;color:#333;font-weight:bold;letter-spacing:-0.3px">JS</div>
<div class="a" style="left:856px;top:125px;font-size:13px;color:#c8c8c8;line-height:16px">siteinfo.js</div>
<svg style="left:913px;top:127px" width="8" height="12"><path d="M1.5 1L6 6L1.5 11" fill="none" stroke="#bbb" stroke-width="1.2"/></svg>
<svg style="left:926px;top:128px" width="14" height="10"><path d="M2.5 0.5H0.5V9.5H2.5M11.5 0.5H13.5V9.5H11.5" fill="none" stroke="#75beff" stroke-width="1"/><path d="M4 3.5L7 2L10 3.5V6.5L7 8L4 6.5z M4 3.5L7 5L10 3.5M7 5V8" fill="none" stroke="#75beff" stroke-width="0.9"/></svg>
<div class="a" style="left:949px;top:125px;font-size:13px;color:#999;line-height:16px">&lt;unknown&gt;</div>

<!-- code -->
<div class="a" style="left:726px;top:145px;width:26px;text-align:right;font-family:'Liberation Mono',monospace;font-size:12px;color:#515151;line-height:24px">1<br>2<br>3<br>4</div>
<svg style="left:760px;top:149px" width="11" height="7"><path d="M0.7 0.7L5.3 5.3L9.9 0.7" fill="none" stroke="#bbb" stroke-width="1.2"/></svg>
<div class="a" style="left:778px;top:145px;font-family:'Liberation Mono',monospace;font-size:12px;letter-spacing:-0.6px;line-height:24px;color:#dcdcdc;white-space:pre"><span style="color:#d98ae6">module.exports</span> <span style="color:#d7d7a0">=</span> <span style="color:#ffd700">{</span>
    <span style="color:#e0e0e0">name</span><span style="color:#8fd3f5">:</span> <span style="color:#b5d9f0">"</span><span style="color:#f06a55;letter-spacing:0">亿码酷站</span><span style="color:#f06a55">YMKUZHAN</span><span style="color:#b5d9f0">"</span><span style="color:#8fd3f5">,</span>
    <span style="color:#e0e0e0">siteroot</span><span style="color:#8fd3f5">:</span> <span style="color:#b5d9f0">""</span>
<span style="color:#ffd700">}</span><span style="color:#8fd3f5">;</span></div>
<svg style="left:778px;top:165px" width="12" height="3"><g fill="#888"><rect x="0" y="0" width="2" height="2"/><rect x="4" y="0" width="2" height="2"/><rect x="8" y="0" width="2" height="2"/></g></svg>
<div class="a" style="left:778px;top:168px;width:1px;height:48px;background:#5a5a5a"></div>
<!-- scrollbar -->
<div class="a" style="left:1912px;top:144px;width:14px;height:501px;background:#4e4e4e"></div>
<div class="a" style="left:1912px;top:645px;width:1px;height:64px;background:#3c3c3c"></div>


<!-- watermark -->
<svg style="left:860px;top:492px" width="64" height="64"><defs><clipPath id="wc"><circle cx="31.4" cy="31.3" r="21.3"/></clipPath></defs>
<circle cx="31.4" cy="31.3" r="28.6" fill="#505050"/>
<g clip-path="url(#wc)" fill="#2e2e2e">
<path d="M22.7 0H28.2V64H22.7z"/>
<path d="M0 0H15.6L16.3 27.3L22.7 32.3V36.4L10.5 29.1L0 26z"/>
<path d="M0 35H10.75L16.3 37.8L19.5 42.9L22.7 45.6V64H0z"/>
<path d="M32.1 0H64V64H32.1z"/>
</g>
<g clip-path="url(#wc)" fill="#505050">
<path d="M37 17.7L39.7 18.9V64H37z"/>
<path d="M45.2 22L47.1 24.5V64H45.2z"/>
</g></svg>
<div class="a" style="left:927px;top:495px;font-weight:900;font-size:31px;line-height:40px;color:#505050;-webkit-text-stroke:1.6px #505050;letter-spacing:2.6px;white-space:nowrap">亿码酷站</div>
<div class="a" style="left:927px;top:534px;font-weight:bold;font-size:16px;line-height:16px;color:#505050;-webkit-text-stroke:0.5px #505050;white-space:nowrap">YMKUZHAN.COM</div>
<!-- DEBUG PANEL -->
<div class="a" style="left:708px;top:709px;width:1219px;height:1px;background:#454545"></div>
<div class="a" style="left:708px;top:710px;width:1219px;height:29px;background:#333333"></div>
<div class="a" style="left:728px;top:717px;font-size:11px;color:#f0f0f0;line-height:16px">调试器</div>
<div class="a" style="left:728px;top:737px;width:33px;height:2px;background:#e0e0e0"></div>
<div class="a" style="left:781px;top:717px;font-size:11px;color:#a8a8a8;line-height:16px">问题</div>
<div class="a" style="left:823px;top:717px;font-size:11px;color:#a8a8a8;line-height:16px">输出</div>
<div class="a" style="left:864px;top:717px;font-size:11px;color:#a8a8a8;line-height:16px">终端</div>
<svg style="left:1861px;top:722px" width="12" height="8"><path d="M1 6.5L6 1.5L11 6.5" fill="none" stroke="#ddd" stroke-width="1.2"/></svg>
<svg style="left:1894px;top:721px" width="11" height="11"><path d="M1 1L10 10M10 1L1 10" stroke="#ddd" stroke-width="1.2"/></svg>
<div class="a" style="left:708px;top:739px;width:1219px;height:26px;background:#292a2d"></div>
<div class="a" style="left:708px;top:765px;width:1219px;height:1px;background:#3d3e42"></div>
<div class="a" style="left:708px;top:766px;width:1219px;height:246px;background:#242424"></div>
<svg style="left:717px;top:745px" width="16" height="15"><path d="M5 12.5H1.5V1.5H12.5V5" fill="none" stroke="#9a9a9a" stroke-width="1.1"/><path d="M5.5 5.5L13.5 8.5L10.2 9.8L13.5 13.5L12.5 14.5L9.2 10.8L7.5 14z" fill="#9a9a9a"/></svg>
<div class="a" style="left:742px;top:744px;width:1px;height:16px;background:#444"></div>
<div class="a" style="left:749px;top:739px;width:54px;height:26px;background:#000"></div>
<div class="a" style="left:761px;top:746px;font-size:12px;color:#fff;line-height:14px">Wxml</div>
<div class="a" style="left:814.6px;top:746px;font-size:12px;color:#e4e4e4;line-height:14px">Console</div>
<div class="a" style="left:880.6px;top:746px;font-size:12px;color:#e4e4e4;line-height:14px">Sources</div>
<div class="a" style="left:946.0px;top:746px;font-size:12px;color:#e4e4e4;line-height:14px">Network</div>
<div class="a" style="left:1014.5px;top:746px;font-size:12px;color:#e4e4e4;line-height:14px">Memory</div>
<div class="a" style="left:1082.4px;top:746px;font-size:12px;color:#e4e4e4;line-height:14px">AppData</div>
<div class="a" style="left:1152.4px;top:746px;font-size:12px;color:#e4e4e4;line-height:14px">Storage</div>
<div class="a" style="left:1216.2px;top:746px;font-size:12px;color:#e4e4e4;line-height:14px">Security</div>
<div class="a" style="left:1291.8px;top:746px;font-size:12px;color:#e4e4e4;line-height:14px">Sensor</div>
<div class="a" style="left:1350.5px;top:746px;font-size:12px;color:#e4e4e4;line-height:14px">Mock</div>
<div class="a" style="left:1403.6px;top:746px;font-size:12px;color:#e4e4e4;line-height:14px">Audits</div>
<div class="a" style="left:1460.7px;top:746px;font-size:12px;color:#e4e4e4;line-height:14px">Trace</div>
<div class="a" style="left:1511.7px;top:746px;font-size:12px;color:#e4e4e4;line-height:14px">Vulnerability</div>

<svg style="left:1804px;top:746px" width="12" height="11"><path d="M6 0.5L11.5 10.5H0.5z" fill="#f4b400" stroke="#f4b400" stroke-width="0.5" stroke-linejoin="round"/><path d="M6 3.3V7M6 8.2V9.4" stroke="#fff" stroke-width="1.3"/></svg>
<div class="a" style="left:1818px;top:746px;font-size:12px;color:#e4e4e4;line-height:14px">4</div>
<div class="a" style="left:1835px;top:744px;width:1px;height:16px;background:#444"></div>
<svg style="left:1846px;top:744px" width="16" height="16"><path d="M13.38 6.44L15.09 6.76L15.09 9.24L13.38 9.56L12.91 10.70L13.89 12.14L12.14 13.89L10.70 12.91L9.56 13.38L9.24 15.09L6.76 15.09L6.44 13.38L5.30 12.91L3.86 13.89L2.11 12.14L3.09 10.70L2.62 9.56L0.91 9.24L0.91 6.76L2.62 6.44L3.09 5.30L2.11 3.86L3.86 2.11L5.30 3.09L6.44 2.62L6.76 0.91L9.24 0.91L9.56 2.62L10.70 3.09L12.14 2.11L13.89 3.86L12.91 5.30z" fill="#9a9a9a" stroke="#9a9a9a" stroke-width="0.4" stroke-linejoin="round"/><circle cx="8" cy="8" r="2.4" fill="#292a2d"/></svg>
<svg style="left:1880px;top:746px" width="4" height="14"><g fill="#9a9a9a"><circle cx="2" cy="1.8" r="1.5"/><circle cx="2" cy="6.8" r="1.5"/><circle cx="2" cy="11.8" r="1.5"/></g></svg>
<svg style="left:1901px;top:744px" width="19" height="17"><path d="M1.8 5V15.2H13" fill="none" stroke="#858585" stroke-width="2"/><rect x="5.2" y="1.6" width="11.8" height="9.5" fill="none" stroke="#858585" stroke-width="2.2"/></svg>

<!-- elements -->
<div class="a" style="left:722px;top:770px;font-family:'Liberation Mono',monospace;font-size:11px;line-height:17px;white-space:pre;color:#5db0d7">&lt;page&gt;</div>
<div class="a" style="left:722px;top:804px;font-family:'Liberation Mono',monospace;font-size:11px;line-height:17px;white-space:pre;color:#5db0d7">&lt;/page&gt;</div>
<div class="a" style="left:733.5px;top:787px;font-family:'Liberation Mono',monospace;font-size:11px;line-height:17px;white-space:pre;color:#5db0d7;background:#242424">&lt;view <span style="color:#9bbbdc">class</span>=<span style="color:#f29766">"container"</span>&gt;<span style="color:#aaa">…</span>&lt;/view&gt;</div>
<svg style="left:725px;top:790px" width="6" height="9"><path d="M0.5 0.5L5.5 4.5L0.5 8.5z" fill="#8a8a8a"/></svg>
<div class="a" style="left:708px;top:989px;width:893px;height:1px;background:#4a4a4a"></div>

<!-- styles sidebar -->
<div class="a" style="left:1601px;top:766px;width:1px;height:246px;background:#3d3e42"></div>
<div class="a" style="left:1602px;top:766px;width:325px;height:26px;background:#292a2d"></div>
<div class="a" style="left:1602px;top:792px;width:325px;height:1px;background:#3d3e42"></div>
<div class="a" style="left:1602px;top:766px;width:50px;height:26px;background:#000"></div>
<div class="a" style="left:1611px;top:773px;font-size:12px;color:#fff;line-height:14px">Styles</div>
<div class="a" style="left:1661px;top:773px;font-size:12px;color:#e4e4e4;line-height:14px">Computed</div>
<div class="a" style="left:1737.4px;top:773px;font-size:12px;color:#e4e4e4;line-height:14px">Dataset</div>
<div class="a" style="left:1797.8px;top:773px;font-size:12px;color:#e4e4e4;line-height:14px">Component Data</div>
<svg style="left:1906px;top:776px" width="10" height="9"><path d="M1 0.8L4.5 4.5L1 8.2M5 0.8L8.5 4.5L5 8.2" fill="none" stroke="#bbb" stroke-width="1.1"/></svg>
<div class="a" style="left:1602px;top:793px;width:325px;height:27px;background:#292a2d"></div>
<div class="a" style="left:1605px;top:796px;width:250px;height:20px;background:#212121"></div>
<div class="a" style="left:1609px;top:800px;font-size:12px;color:#8a8a8a;line-height:14px">Filter</div>
<div class="a" style="left:1864px;top:799px;font-family:'Liberation Mono',monospace;font-weight:bold;font-size:11px;color:#e8e8e8;line-height:14px">.cls</div>
<svg style="left:1904px;top:800px" width="16" height="16"><path d="M6 0.5V11.5M0.5 6H11.5" stroke="#5a5a5a" stroke-width="1.2"/><path d="M15 11V15H11z" fill="#555"/></svg>

<!-- STATUS BAR -->
<div class="a" style="left:508px;top:1012px;width:1419px;height:28px;background:#3a3a3a"></div>
<svg style="left:522px;top:1019px" width="14" height="14"><circle cx="6.8" cy="6.8" r="5.9" fill="none" stroke="#aaa" stroke-width="1"/><path d="M4.5 4.5L9.1 9.1M9.1 4.5L4.5 9.1" stroke="#aaa" stroke-width="1"/></svg>
<div class="a" style="left:540px;top:1018px;font-size:12px;color:#bbb;line-height:16px">0</div>
<svg style="left:550px;top:1019px" width="14" height="13"><path d="M6.8 1L12.8 11.8H0.8z" fill="none" stroke="#aaa" stroke-width="1"/><path d="M6.8 4.5V8.5M6.8 9.5V10.5" stroke="#aaa" stroke-width="1"/></svg>
<div class="a" style="left:567px;top:1018px;font-size:12px;color:#bbb;line-height:16px">0</div>
<div class="a" style="left:1625px;top:1019px;font-size:12px;color:#b4b4b4;line-height:16px;white-space:nowrap">行 1，列 1</div>
<div class="a" style="left:1697px;top:1019px;font-size:12px;color:#b4b4b4;line-height:16px;white-space:nowrap">空格: 4</div>
<div class="a" style="left:1749px;top:1019px;font-size:11px;color:#b4b4b4;line-height:16px;white-space:nowrap">UTF-8</div>
<div class="a" style="left:1797px;top:1019px;font-size:11px;color:#b4b4b4;line-height:16px;white-space:nowrap">LF</div>
<div class="a" style="left:1825px;top:1019px;font-size:11px;color:#b4b4b4;line-height:16px;white-space:nowrap">JavaScript</div>
<svg style="left:1897px;top:1020px" width="12" height="15"><path d="M6 1.5Q2 1.5 2 6V9.5L0.8 11.5H11.2L10 9.5V6Q10 1.5 6 1.5z" fill="none" stroke="#ddd" stroke-width="1.2"/><path d="M4.8 13H7.2" stroke="#ddd" stroke-width="1.5"/></svg>
<div class="a" style="left:1824px;top:1045px;width:34px;height:2px;overflow:hidden"><div style="position:absolute;left:0;top:0px;font-size:12px;line-height:14px;color:#f0f0f0;white-space:nowrap">19:04</div></div>
<div class="a" style="left:1922px;top:1040px;width:1px;height:7px;background:#8a8a8a"></div>
</body></html>
